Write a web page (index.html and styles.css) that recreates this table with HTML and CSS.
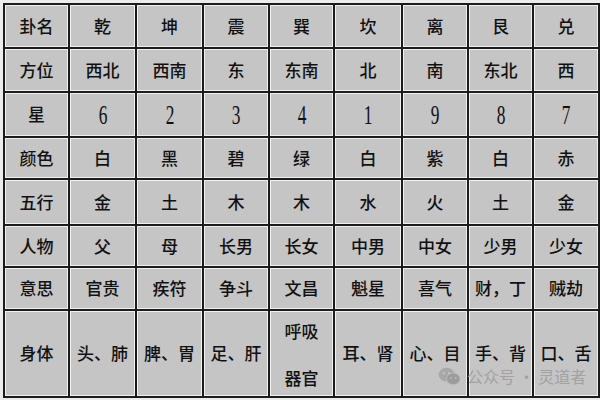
FILE: index.html
```html
<!DOCTYPE html>
<html lang="zh">
<head>
<meta charset="utf-8">
<link rel="stylesheet" href="styles.css">
</head>
<body>
<div class="page">
  <div class="grid">
    <div class="c">卦名</div><div class="c">乾</div><div class="c">坤</div><div class="c">震</div><div class="c">巽</div><div class="c">坎</div><div class="c">离</div><div class="c">艮</div><div class="c">兑</div>
    <div class="c">方位</div><div class="c">西北</div><div class="c">西南</div><div class="c">东</div><div class="c">东南</div><div class="c">北</div><div class="c">南</div><div class="c">东北</div><div class="c">西</div>
    <div class="c">星</div><div class="c"><span class="n">6</span></div><div class="c"><span class="n">2</span></div><div class="c"><span class="n">3</span></div><div class="c"><span class="n">4</span></div><div class="c"><span class="n">1</span></div><div class="c"><span class="n">9</span></div><div class="c"><span class="n">8</span></div><div class="c"><span class="n">7</span></div>
    <div class="c">颜色</div><div class="c">白</div><div class="c">黑</div><div class="c">碧</div><div class="c">绿</div><div class="c">白</div><div class="c">紫</div><div class="c">白</div><div class="c">赤</div>
    <div class="c">五行</div><div class="c">金</div><div class="c">土</div><div class="c">木</div><div class="c">木</div><div class="c">水</div><div class="c">火</div><div class="c">土</div><div class="c">金</div>
    <div class="c">人物</div><div class="c">父</div><div class="c">母</div><div class="c">长男</div><div class="c">长女</div><div class="c">中男</div><div class="c">中女</div><div class="c">少男</div><div class="c">少女</div>
    <div class="c">意思</div><div class="c">官贵</div><div class="c">疾符</div><div class="c">争斗</div><div class="c">文昌</div><div class="c">魁星</div><div class="c">喜气</div><div class="c">财，丁</div><div class="c">贼劫</div>
    <div class="c">身体</div><div class="c">头、肺</div><div class="c">脾、胃</div><div class="c">足、肝</div><div class="c two">呼吸<br>器官</div><div class="c">耳、肾</div><div class="c">心、目</div><div class="c">手、背</div><div class="c">口、舌</div>
  </div>
  <div class="mark">
    <svg class="wx" width="23" height="19" viewBox="0 0 24 20">
      <ellipse cx="9" cy="8" rx="8.5" ry="7.2" fill="#a8a8a8"/>
      <ellipse cx="16" cy="12.5" rx="7.2" ry="6.2" fill="#9c9c9c" stroke="#bdbdbd" stroke-width="1"/>
      <circle cx="6" cy="6.5" r="1.1" fill="#c8c8c8"/>
      <circle cx="11.5" cy="6.5" r="1.1" fill="#c8c8c8"/>
      <circle cx="13.5" cy="11.5" r="0.9" fill="#c0c0c0"/>
      <circle cx="18.5" cy="11.5" r="0.9" fill="#c0c0c0"/>
    </svg>
    <span>公众号 · 灵道者</span>
  </div>
</div>
</body>
</html>
```
FILE: styles.css
```css
html, body {
  margin: 0;
  padding: 0;
  background: #ececec;
}
.page {
  position: relative;
  width: 600px;
  height: 400px;
  padding: 3px 0 0 3px;
  box-sizing: border-box;
}
.grid {
  display: grid;
  grid-template-columns: 63px 65px 65px 64px 63px 66px 64px 63px 64px;
  grid-template-rows: 42px 42px 43px 40px 44px 40px 41px 85px;
  gap: 2px;
  padding: 2px;
  width: max-content;
  background: #1c1c1c;
}
.c {
  background: #c5c5c5;
  border: 1px solid #f0f0f0;
  display: flex;
  align-items: center;
  justify-content: center;
  text-align: center;
  font-family: "Noto Sans CJK SC", "Noto Sans", sans-serif;
  font-size: 17px;
  font-weight: 500;
  color: #111;
  line-height: 1.2;
}
.n {
  display: inline-block;
  font-family: "Liberation Serif", serif;
  font-size: 28px;
  line-height: 1;
  font-weight: normal;
  transform: scaleX(0.62);
}
.two {
  line-height: 47px;
}
.mark {
  position: absolute;
  left: 438px;
  top: 366px;
  display: flex;
  align-items: center;
  gap: 6px;
  font-family: "Noto Sans CJK SC", sans-serif;
  font-size: 16px;
  line-height: 20px;
  color: #a2a2a2;
  white-space: nowrap;
}
.wx { display: block; }
```
